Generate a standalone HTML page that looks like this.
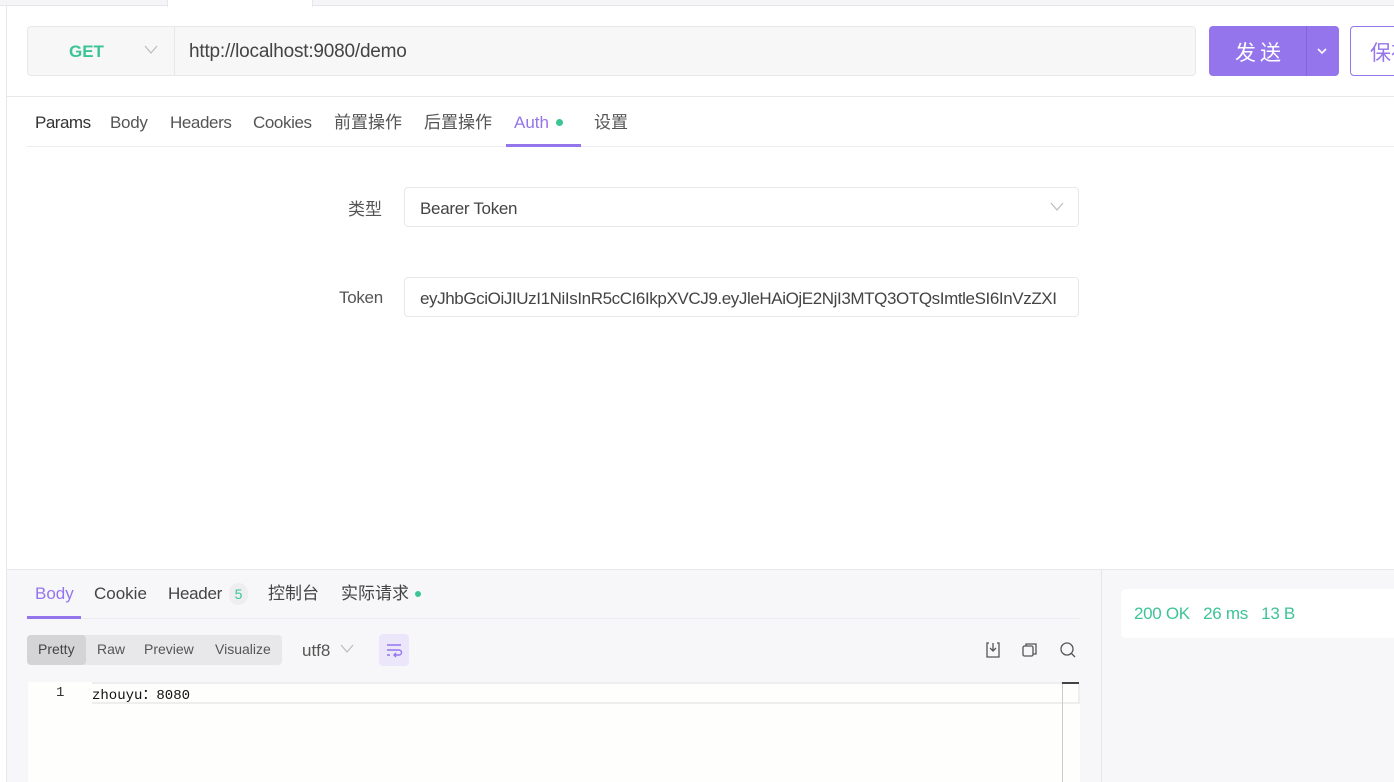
<!DOCTYPE html>
<html><head><meta charset="utf-8"><style>
*{box-sizing:border-box;margin:0;padding:0}
body{width:1394px;height:782px;overflow:hidden;background:#fff;font-family:"Liberation Sans","Noto Sans CJK SC",sans-serif;color:#333;position:relative}
.a{position:absolute;white-space:nowrap}
</style></head><body>
<div class="a" style="left:0;top:0;width:1394px;height:6px;background:#f5f5f7;border-bottom:1px solid #e6e6ea"></div>
<div class="a" style="left:167px;top:0;width:146px;height:7px;background:#fff;border-left:1px solid #e6e6ea;border-right:1px solid #e6e6ea"></div>
<div class="a" style="left:6px;top:6px;width:1px;height:776px;background:#e8e8ec"></div>
<div class="a" style="left:27px;top:26px;width:1169px;height:50px;background:#f7f7f8;border:1px solid #e8e8ec;border-radius:4px"></div>
<div class="a" style="left:174px;top:27px;width:1px;height:48px;background:#e8e8ec"></div>
<div class="a" style="left:69px;top:42px;font-size:17px;font-weight:bold;color:#3cc495">GET</div>
<svg class="a" style="left:144px;top:45px" width="14" height="10"><path d="M1 1L7 8L13 1" fill="none" stroke="#bbb" stroke-width="1.2"/></svg>
<div class="a" style="left:189px;top:41px;font-size:19px;color:#444;letter-spacing:-0.2px">http://localhost:9080/demo</div>
<div class="a" style="left:1209px;top:26px;width:130px;height:50px;background:#9575eb;border-radius:4px"></div>
<div class="a" style="left:1306px;top:26px;width:1px;height:50px;background:#8565d8"></div>
<div class="a" style="left:1235px;top:37px;font-size:21px;color:#fff;letter-spacing:4px">发送</div>
<svg class="a" style="left:1316px;top:47px" width="12" height="8"><path d="M2 2L6 6L10 2" fill="none" stroke="#fff" stroke-width="1.6"/></svg>
<div class="a" style="left:1350px;top:26px;width:60px;height:50px;border:1px solid #9575eb;border-radius:4px"></div>
<div class="a" style="left:1370px;top:37px;font-size:21px;color:#9575eb">保存</div>
<div class="a" style="left:7px;top:96px;width:1387px;height:1px;background:#e8e8ec"></div>
<div class="a" style="left:35px;top:113px;font-size:17px;color:#333;letter-spacing:-0.5px">Params</div>
<div class="a" style="left:110px;top:113px;font-size:17px;color:#555;letter-spacing:-0.3px">Body</div>
<div class="a" style="left:170px;top:113px;font-size:17px;color:#555;letter-spacing:-0.4px">Headers</div>
<div class="a" style="left:253px;top:113px;font-size:17px;color:#555;letter-spacing:-0.4px">Cookies</div>
<div class="a" style="left:334px;top:108px;font-size:17px;color:#555">前置操作</div>
<div class="a" style="left:424px;top:108px;font-size:17px;color:#555">后置操作</div>
<div class="a" style="left:514px;top:113px;font-size:17px;color:#9575eb">Auth</div>
<div class="a" style="left:556px;top:119px;width:7px;height:7px;border-radius:50%;background:#3cc495"></div>
<div class="a" style="left:594px;top:108px;font-size:17px;color:#555">设置</div>
<div class="a" style="left:27px;top:146px;width:1367px;height:1px;background:#ececf0"></div>
<div class="a" style="left:506px;top:144px;width:75px;height:3px;background:#9575eb"></div>
<div class="a" style="left:348px;top:195px;font-size:17px;color:#555">类型</div>
<div class="a" style="left:404px;top:187px;width:675px;height:40px;border:1px solid #e8e8ec;border-radius:4px"></div>
<div class="a" style="left:420px;top:199px;font-size:17px;color:#444;letter-spacing:-0.3px">Bearer Token</div>
<svg class="a" style="left:1050px;top:202px" width="14" height="10"><path d="M1 1L7 8L13 1" fill="none" stroke="#bbb" stroke-width="1.2"/></svg>
<div class="a" style="left:339px;top:288px;font-size:17px;color:#555;letter-spacing:-0.3px">Token</div>
<div class="a" style="left:404px;top:277px;width:675px;height:40px;border:1px solid #e8e8ec;border-radius:4px;overflow:hidden"><div style="position:absolute;left:15px;top:11px;font-size:17px;color:#444;letter-spacing:-0.4px">eyJhbGciOiJIUzI1NiIsInR5cCI6IkpXVCJ9.eyJleHAiOjE2NjI3MTQ3OTQsImtleSI6InVzZXI</div></div>
<div class="a" style="left:7px;top:569px;width:1387px;height:213px;background:#f7f7f9;border-top:1px solid #e8e8ec"></div>
<div class="a" style="left:1101px;top:570px;width:1px;height:212px;background:#e6e6ea"></div>
<div class="a" style="left:35px;top:584px;font-size:17px;color:#9575eb">Body</div>
<div class="a" style="left:94px;top:584px;font-size:17px;color:#444">Cookie</div>
<div class="a" style="left:168px;top:584px;font-size:17px;color:#444;letter-spacing:-0.3px">Header</div>
<div class="a" style="left:229px;top:583px;width:19px;height:22px;border-radius:10px;background:#eeeef0;font-size:14px;color:#3cc495;text-align:center;line-height:22px">5</div>
<div class="a" style="left:268px;top:579px;font-size:17px;color:#444">控制台</div>
<div class="a" style="left:341px;top:579px;font-size:17px;color:#444">实际请求</div>
<div class="a" style="left:415px;top:591px;width:6px;height:6px;border-radius:50%;background:#3cc495"></div>
<div class="a" style="left:27px;top:618px;width:1054px;height:1px;background:#ececf0"></div>
<div class="a" style="left:27px;top:616px;width:54px;height:3px;background:#9575eb"></div>
<div class="a" style="left:27px;top:635px;width:255px;height:30px;background:#e8e8ea;border-radius:4px"></div>
<div class="a" style="left:27px;top:635px;width:59px;height:30px;background:#d4d4d6;border-radius:4px"></div>
<div class="a" style="left:38px;top:641px;font-size:14px;color:#444">Pretty</div>
<div class="a" style="left:97px;top:641px;font-size:14px;color:#555">Raw</div>
<div class="a" style="left:144px;top:641px;font-size:14px;color:#555">Preview</div>
<div class="a" style="left:215px;top:641px;font-size:14px;color:#555">Visualize</div>
<div class="a" style="left:302px;top:641px;font-size:17px;color:#555">utf8</div>
<svg class="a" style="left:340px;top:644px" width="14" height="10"><path d="M1 1L7 8L13 1" fill="none" stroke="#bbb" stroke-width="1.2"/></svg>
<div class="a" style="left:379px;top:634px;width:30px;height:32px;background:#ece6fb;border-radius:4px"></div>
<svg class="a" style="left:385px;top:641px" width="18" height="18"><path d="M2 4H16M2 9H14a2.5 2.5 0 0 1 0 5H9M11 12L9 14L11 16M2 14H5" fill="none" stroke="#9575eb" stroke-width="1.4"/></svg>
<svg class="a" style="left:984px;top:641px" width="18" height="18"><path d="M5 2H3v14h12V2h-2M9 2v8M6 7l3 3 3-3" fill="none" stroke="#555" stroke-width="1.3"/></svg>
<svg class="a" style="left:1021px;top:641px" width="18" height="18"><rect x="2" y="5" width="10" height="10" rx="1.5" fill="none" stroke="#555" stroke-width="1.3"/><path d="M5 5V3h10v10h-3" fill="none" stroke="#555" stroke-width="1.3"/></svg>
<svg class="a" style="left:1059px;top:641px" width="18" height="18"><circle cx="8" cy="8" r="6" fill="none" stroke="#555" stroke-width="1.3"/><path d="M12.5 12.5L16 16" stroke="#555" stroke-width="1.3"/></svg>
<div class="a" style="left:28px;top:682px;width:1052px;height:100px;background:#fefefc"></div>
<div class="a" style="left:92px;top:682px;width:988px;height:22px;border:2px solid #eeeeee;border-left:none"></div>
<div class="a" style="left:56px;top:685px;font-family:'Liberation Mono',monospace;font-size:14px;color:#333">1</div>
<div class="a" style="left:92px;top:684px;font-family:'Liberation Mono','Noto Sans CJK SC',monospace;font-size:14px;color:#111">zhouyu：8080</div>
<div class="a" style="left:1062px;top:682px;width:1px;height:100px;background:#ccc"></div>
<div class="a" style="left:1062px;top:682px;width:17px;height:2px;background:#444"></div>
<div class="a" style="left:1121px;top:589px;width:280px;height:49px;background:#fff;border-radius:5px"></div>
<div class="a" style="left:1134px;top:604px;font-size:17px;color:#3cc495;letter-spacing:-0.3px">200 OK&nbsp;&nbsp;&nbsp;26 ms&nbsp;&nbsp;&nbsp;13 B</div>
</body></html>
